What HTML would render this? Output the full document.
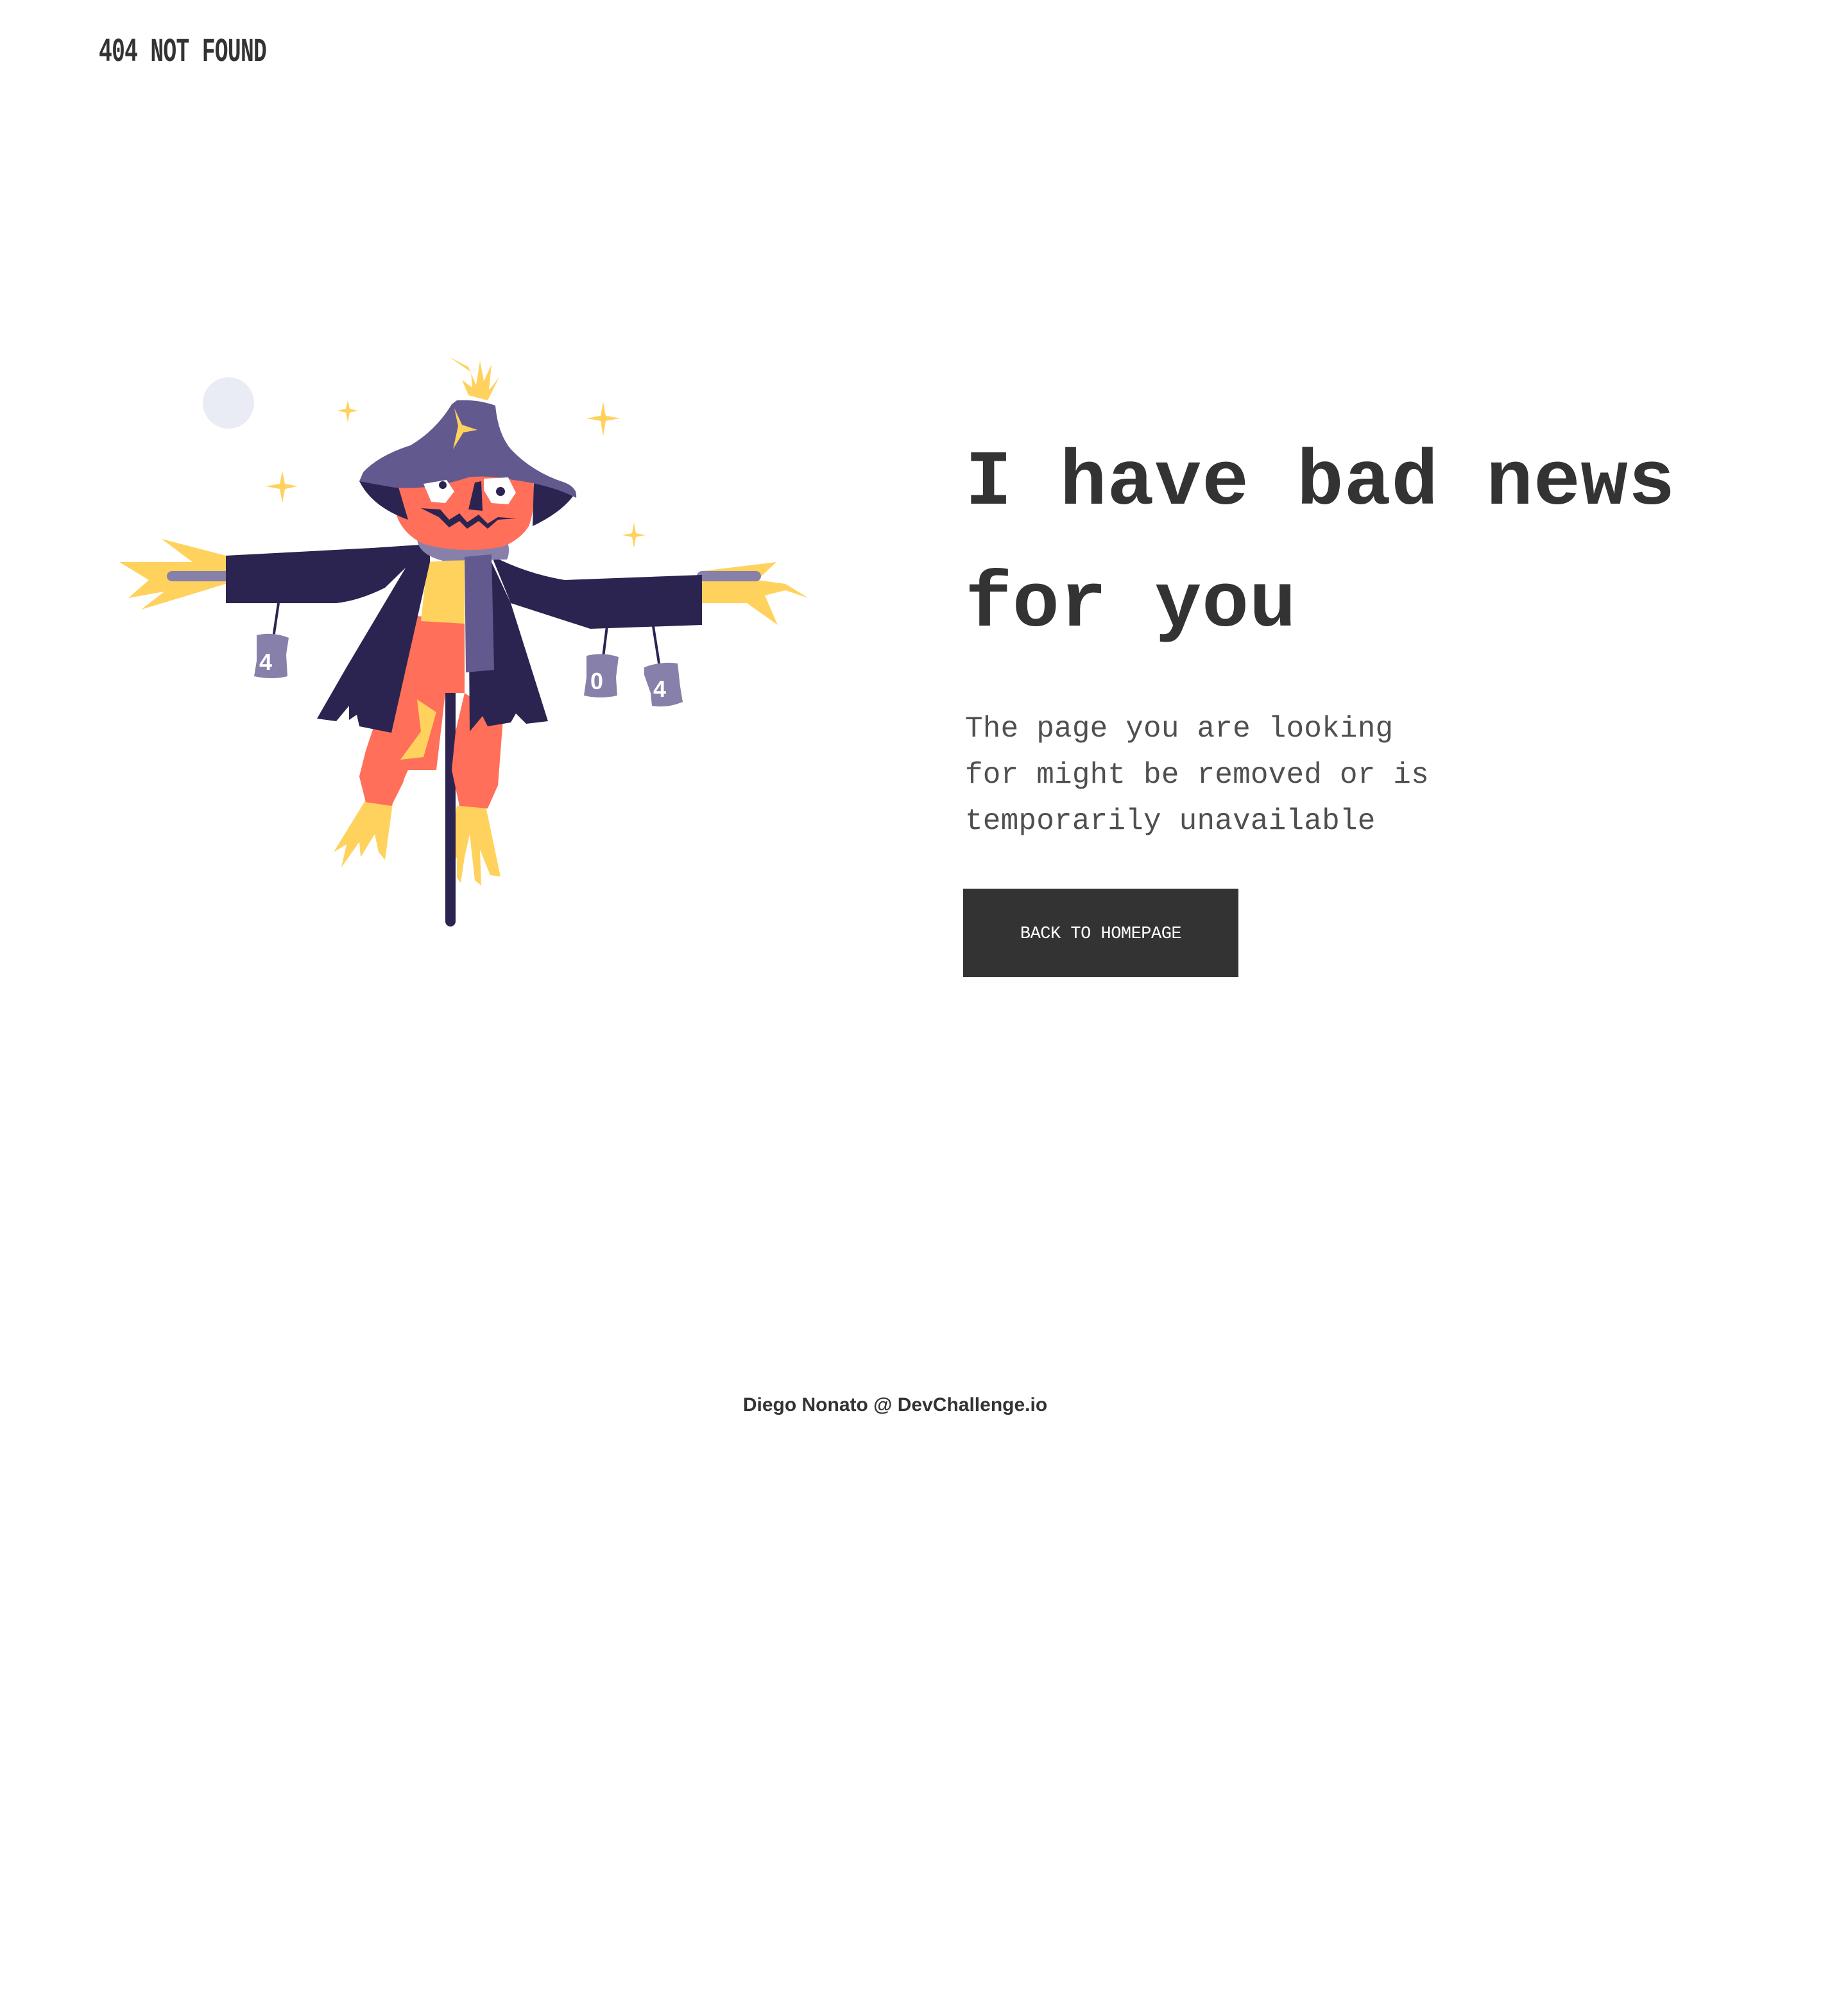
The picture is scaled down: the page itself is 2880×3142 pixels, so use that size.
<!DOCTYPE html>
<html><head><meta charset="utf-8"><style>
html,body{margin:0;padding:0;background:#fff;}
body{width:2880px;height:3142px;position:relative;overflow:hidden;}
.hdr{position:absolute;left:154px;top:56px;font:bold 52px/1 "Liberation Mono",monospace;color:#333;transform:scaleX(0.665);transform-origin:0 0;white-space:nowrap;letter-spacing:-1px}
.h1{position:absolute;left:1504px;font:bold 122px/1 "Liberation Mono",monospace;color:#333;white-space:nowrap;letter-spacing:0.6px}
.p{position:absolute;left:1504px;top:1100px;font:46px/72px "Liberation Mono",monospace;color:#4f4f4f;white-space:nowrap;letter-spacing:0.2px}
.btn{position:absolute;left:1501px;top:1385px;width:429px;height:138px;background:#333;color:#fff;font:27px/142px "Liberation Mono",monospace;text-align:center;letter-spacing:-0.5px}
.ft{position:absolute;left:0;width:2790px;top:2172px;text-align:center;font:bold 30px/36px "Liberation Sans",sans-serif;color:#333}
svg{position:absolute;left:0;top:0}
</style></head><body>
<div class="hdr">404 NOT FOUND</div>
<div class="h1" style="top:692px">I have bad news</div>
<div class="h1" style="top:882px">for you</div>
<div class="p">The page you are looking<br>for might be removed or is<br>temporarily unavailable</div>
<div class="btn">BACK TO HOMEPAGE</div>
<div class="ft">Diego Nonato @ DevChallenge.io</div>
<svg width="1440" height="1600" viewBox="0 0 720 800">
<circle cx="178" cy="314" r="20" fill="#e9ecf5"/>
<g fill="#ffd25d">
<path d="M271 312 L272.5 318.5 L279 320 L272.5 321.5 L271 329 L269.5 321.5 L263 320 L269.5 318.5Z"/>
<path d="M220 367 L222 377 L232 379 L222 381 L220 392 L218 381 L207 379 L218 377Z"/>
<path d="M470 313 L472 324 L483 326 L472 328 L470 340 L468 328 L457 326 L468 324Z"/>
<path d="M494 407 L495.5 415.5 L503 417 L495.5 418.5 L494 427 L492.5 418.5 L485 417 L492.5 415.5Z"/>
<path d="M350 278 L367 290 L368 302 L360 296 L365 308 L380 312 L389 294 L381 304 L383 284 L377 297 L374 281 L371 300 L365 286Z"/>
<path d="M176 433 L126 420 L150 438 L93 438 L116 452 L100 466 L128 461 L110 475 L176 455Z"/>
<path d="M547 445 L605 438 L590 452 L612 455 L630 466 L612 460 L596 464 L606 487 L582 470 L547 470Z"/>
<path d="M287 620 L260 664 L270 658 L266 676 L280 656 L281 668 L292 650 L295 664 L300 670 L306 626Z"/>
<path d="M356 628 L347 680 L356 668 L356 684 L359 688 L362 668 L366 650 L370 686 L375 690 L374 662 L382 682 L390 683 L378 626Z"/>
</g>
<rect x="130" y="445" width="50" height="8" rx="4" fill="#8780ab"/>
<rect x="543" y="445" width="50" height="8" rx="4" fill="#8780ab"/>
<rect x="347" y="535" width="8" height="187" rx="4" fill="#2b2450"/>
<path d="M322 480 L362 482 L362 540 L355 570 L352 600 L358 628 L380 630 L388 612 L392 560 L362 540 L345 540 L325 575 L314 610 L305 628 L285 625 L280 605 L285 585 L300 540 L318 505Z" fill="#ff6f5a"/>
<path d="M322 480 L362 482 L362 540 L347 540 L340 600 L318 600 L305 628 L285 625 L280 605 L300 540Z" fill="#ff6f5a"/>
<path d="M325 545 L340 555 L330 590 L312 592 L328 570Z" fill="#ffd25d"/>
<path d="M333 438 L362 436 L362 486 L328 484Z" fill="#ffd25d"/>
<g fill="#2b2450">
<path d="M176 433 L290 427 L335 424 L300 458 Q280 468 262 470 L176 470Z"/>
<path d="M383 433 Q410 447 440 452 L547 448 L547 487 L460 490 L398 470Z"/>
<path d="M327 424 L270 520 L247 560 L262 562 L272 550 L272 561 L278 557 L280 566 L305 571 L335 438 L335 424Z"/>
<path d="M383 438 L398 470 L427 562 L410 564 L402 556 L398 563 L380 566 L376 558 L366 570 L365 445Z"/>
</g>
<path d="M325 420 Q326 432 345 437 L395 436 Q398 430 395 420 Q360 428 325 420Z" fill="#8780ab"/>
<path d="M362 434 L383 432 L385 522 L363 524Z" fill="#625a8e"/>
<path d="M310 370 L415 368 Q418 395 412 410 Q406 420 392 426 Q360 432 330 424 Q312 415 308 398Z" fill="#ff6f5a"/>
<path d="M280 375 Q290 395 318 405 L310 378Z" fill="#2b2450"/>
<path d="M449 383 Q440 398 415 410 L416 376Z" fill="#2b2450"/>
<path d="M283 368 Q295 355 320 347 Q340 335 352 315 L356 312 Q372 311 386 316 Q388 338 398 350 Q415 368 440 376 Q450 380 449 388 Q430 378 400 374 Q380 370 365 372 Q335 382 308 380 Q290 377 280 375Z" fill="#625a8e"/>
<path d="M354 318 L360 331 L372 335 L361 337 L353 350 L357 332Z" fill="#ffd25d"/>
<path d="M330 377 L348 374 L354 383 L347 392 L336 391Z" fill="#fff"/>
<circle cx="345" cy="378" r="3" fill="#2b2450"/>
<path d="M377 373 L396 372 L402 384 L396 393 L383 392 L377 382Z" fill="#fff"/>
<circle cx="390" cy="383" r="3.5" fill="#2b2450"/>
<path d="M370 376 L375 375 L376 398 L365 397Z" fill="#2b2450"/>
<path d="M328 396 L343 397 L350 405 L358 400 L364 407 L373 401 L380 408 L388 403 L402 404 L388 405 L380 412 L373 406 L364 412 L358 406 L350 411 L342 403Z" fill="#2b2450"/>
<g stroke="#2b2450" stroke-width="2"><line x1="217" y1="470" x2="213" y2="497"/><line x1="473" y1="488" x2="470" y2="512"/><line x1="509" y1="488" x2="514" y2="520"/></g>
<g fill="#8780ab">
<path d="M200 495 Q212 492 225 497 L223 510 L224 527 Q212 530 198 527 L200 515Z"/>
<path d="M457 511 Q470 508 482 512 L480 528 L481 542 Q468 545 455 542 L457 528Z"/>
<path d="M502 520 Q515 515 528 517 L530 535 L532 547 Q520 552 508 550 L507 540 L502 526Z"/>
</g>
<g fill="#fff" font-family="Liberation Sans,sans-serif" font-weight="bold" font-size="18">
<text x="202" y="522">4</text><text x="460" y="537">0</text><text x="509" y="543">4</text>
</g>
</svg>
</body></html>
